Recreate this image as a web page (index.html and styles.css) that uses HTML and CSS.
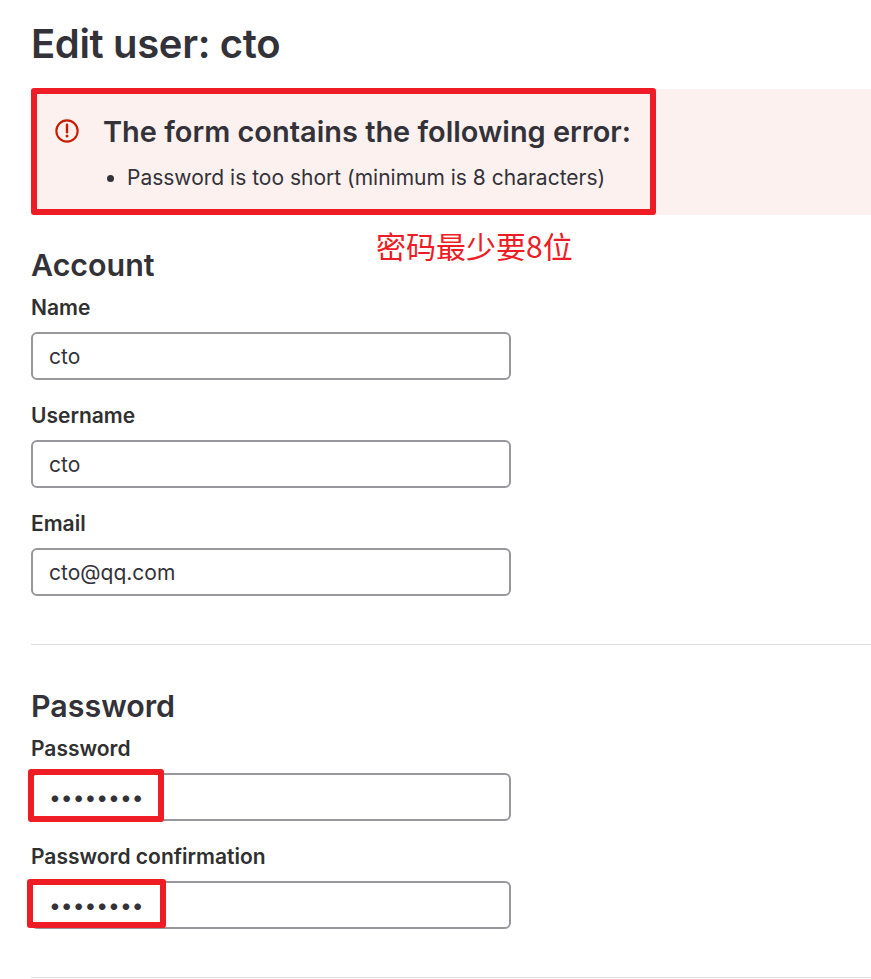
FILE: index.html
```html
<!DOCTYPE html>
<html lang="en">
  <head>
    <meta charset="UTF-8" />
    <title>Edit user: cto</title>
    <link rel="stylesheet" href="styles.css">
  </head>
  <body>
    <h1 class="page_title">Edit user: cto</h1>

    <div class="alert">
      <svg class="alert_icon" viewBox="0 0 16 16" width="24" height="24" fill="none">
        <circle cx="8" cy="8" r="7.1" stroke="#c91c00" stroke-width="1.4" />
        <path d="M8 3.8v5" stroke="#c91c00" stroke-width="1.6" stroke-linecap="round" />
        <circle cx="8" cy="11.4" r="1" fill="#c91c00" />
      </svg>
      <div class="alert_body">
        <h2 class="alert_title">The form contains the following error:</h2>
        <ul class="alert_list">
          <li>Password is too short (minimum is 8 characters)</li>
        </ul>
      </div>
      <span class="mark mark_alert"></span>
    </div>
    <p class="note">密码最少要8位</p>

    <section class="group">
      <h2 class="group_title">Account</h2>
      <div class="field">
        <label for="name">Name</label>
        <input type="text" id="name" value="cto">
      </div>
      <div class="field">
        <label for="username">Username</label>
        <input type="text" id="username" value="cto">
      </div>
      <div class="field">
        <label for="email">Email</label>
        <input type="text" id="email" value="cto@qq.com">
      </div>
    </section>

    <hr>

    <section class="group">
      <h2 class="group_title">Password</h2>
      <div class="field">
        <label for="password">Password</label>
        <div class="input_wrap">
          <input type="password" id="password" value="12345678">
          <span class="mark mark_first"></span>
        </div>
      </div>
      <div class="field">
        <label for="confirm">Password confirmation</label>
        <div class="input_wrap">
          <input type="password" id="confirm" value="12345678">
          <span class="mark mark_second"></span>
        </div>
      </div>
    </section>

    <hr>
  </body>
</html>
```

FILE: styles.css
```css
* {
  padding: 0;
  margin: 0;
  box-sizing: border-box;
}
html {
  overflow: hidden;
}
body {
  height: 979px;
  padding-left: 31px;
  background: #fff;
  color: #303030;
  font-family: Inter, "Noto Sans CJK SC", sans-serif;
  font-size: 21px;
  overflow: hidden;
}

.page_title {
  height: 89px;
  padding-top: 18px;
  font-size: 40px;
  line-height: 52px;
  font-weight: 600;
  letter-spacing: -0.35px;
  color: #333238;
}

/* error box */
.alert {
  position: relative;
  display: flex;
  height: 126px;
  padding: 26px 0 0 24px;
  background: #fcf1ef;
}
.alert_icon {
  flex: none;
  margin-top: 4px;
}
.alert_body {
  margin-left: 24px;
}
.alert_title {
  font-size: 28.95px;
  line-height: 34px;
  font-weight: 600;
  color: #333238;
}
.alert_list {
  margin-top: 15px;
  padding-left: 24px;
  font-size: 21px;
  line-height: 28px;
  color: #333238;
}

.note {
  position: absolute;
  left: 376px;
  top: 226px;
  font-size: 30px;
  line-height: 38px;
  color: #ee1c25;
  font-family: "Noto Sans CJK SC", sans-serif;
}

/* red marks drawn on top of the screenshot */
.mark {
  position: absolute;
  border: 6px solid #ee1c25;
  border-radius: 3px;
  pointer-events: none;
}
.mark_alert {
  left: 0;
  top: -1px;
  width: 625px;
  height: 127px;
}
.mark_first {
  left: -3px;
  top: -4px;
  width: 136px;
  height: 53px;
}
.mark_second {
  left: -4px;
  top: -2px;
  width: 139px;
  height: 49px;
}

/* form */
.group {
  width: 480px;
}
.group_title {
  font-size: 30.4px;
  line-height: 38px;
  font-weight: 600;
  color: #333238;
}
section.group:first-of-type {
  padding-top: 31px;
}
.field {
  margin-top: 11px;
  margin-bottom: 23px;
}
.field + .field {
  margin-top: 0;
}
.field label {
  display: block;
  font-size: 21px;
  line-height: 26px;
  font-weight: 600;
  margin-bottom: 11px;
}
.field input {
  display: block;
  width: 480px;
  height: 48px;
  padding: 0 16px;
  border: 2px solid #98979b;
  border-radius: 6px;
  outline: none;
  font-family: inherit;
  font-size: 21px;
  color: #333238;
  background: #fff;
}
.input_wrap {
  position: relative;
}

hr {
  height: 1px;
  margin-top: 48px;
  border: none;
  background: #dcdcde;
}
hr + .group {
  padding-top: 42px;
}
```
